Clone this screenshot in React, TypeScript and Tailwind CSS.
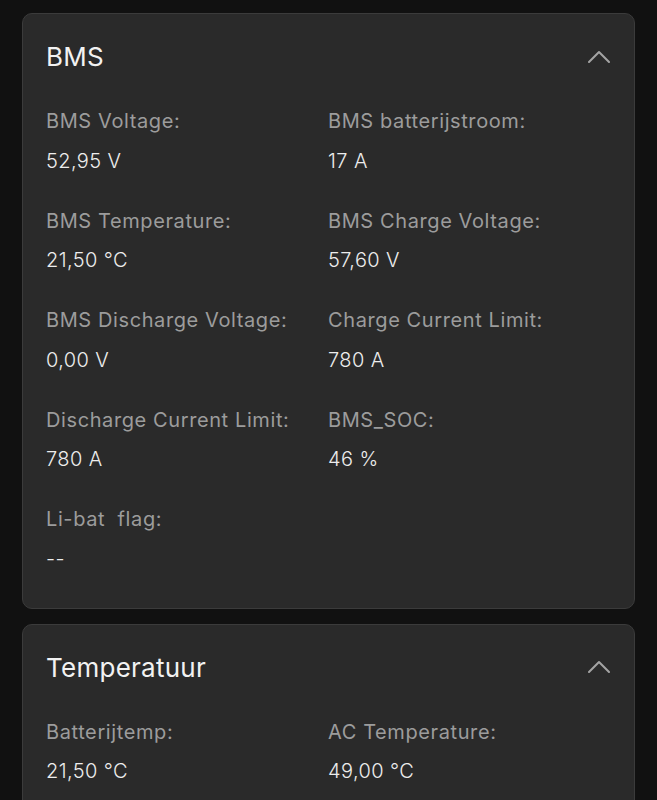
const bms = [
  { label: 'BMS Voltage:', value: '52,95 V' },
  { label: 'BMS batterijstroom:', value: '17 A' },
  { label: 'BMS Temperature:', value: '21,50 °C' },
  { label: 'BMS Charge Voltage:', value: '57,60 V' },
  { label: 'BMS Discharge Voltage:', value: '0,00 V' },
  { label: 'Charge Current Limit:', value: '780 A' },
  { label: 'Discharge Current Limit:', value: '780 A' },
  { label: 'BMS_SOC:', value: '46 %' },
  { label: 'Li-bat\u00a0 flag:', value: '--' },
]

const temps = [
  { label: 'Batterijtemp:', value: '21,50 °C' },
  { label: 'AC Temperature:', value: '49,00 °C' },
]

function Chevron() {
  return (
    <svg width="22" height="13" viewBox="0 0 22 13" fill="none" className="mt-[-2px]">
      <polyline points="1,12 11,2 21,12" stroke="#a3a3a3" strokeWidth="2" strokeLinecap="round" strokeLinejoin="round" />
    </svg>
  )
}

function Card({ title, items }: { title: string; items: { label: string; value: string }[] }) {
  return (
    <section className="rounded-[10px] border border-[#3b3b3b] bg-[#2a2a2a] pl-[23px] pr-[24px] pt-[27px] pb-[35px]">
      <div className="flex items-center justify-between mb-[34px]">
        <h2 className="text-[26px] leading-8 text-[#f2f2f2] tracking-[0.01em]">{title}</h2>
        <Chevron />
      </div>
      <div className="grid grid-cols-2 gap-y-[32px]">
        {items.map((it) => (
          <div key={it.label}>
            <p className="text-[20px] leading-7 text-[#9c9c9c] tracking-[0.03em]">{it.label}</p>
            <p className="mt-[11.5px] text-[20px] leading-7 font-light text-[#ededed] tracking-[0.02em]">{it.value}</p>
          </div>
        ))}
      </div>
    </section>
  )
}

export default function App() {
  return (
    <div
      className="min-h-screen bg-[#111111] px-[22px] pt-[13px] pb-6 flex flex-col gap-[15px] w-[657px]"
      style={{ fontFamily: 'Inter, "Noto Sans", sans-serif' }}
    >
      <Card title="BMS" items={bms} />
      <Card title="Temperatuur" items={temps} />
    </div>
  )
}
